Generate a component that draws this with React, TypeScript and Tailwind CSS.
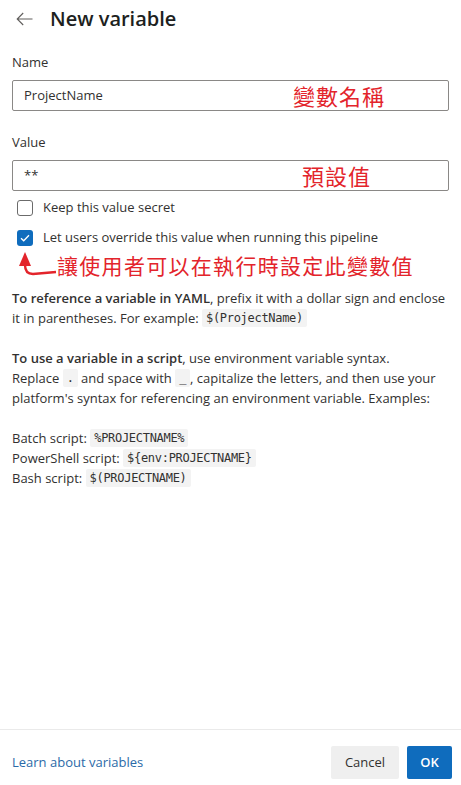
const body = { fontFamily: '"Open Sans", "Noto Sans", sans-serif' };
const cjk = { fontFamily: '"Noto Sans CJK TC", "Noto Sans CJK SC", sans-serif' };

function Code({ children }: { children: React.ReactNode }) {
  return (
    <code className="inline-block align-top mt-[1px] bg-[#f3f3f3] px-[4px] rounded-[2px] text-[12px] leading-[18px] text-[#323130] font-['DejaVu_Sans_Mono','Liberation_Mono',monospace] tracking-[-0.3px]">
      {children}
    </code>
  );
}

function Checkbox({ checked, label }: { checked?: boolean; label: string }) {
  return (
    <label className="flex items-center h-[16px] pl-[17px] gap-[10px] text-[13px] text-[#323130]">
      {checked ? (
        <span className="w-[16px] h-[16px] rounded-[3px] bg-[#0f6cbd] flex items-center justify-center">
          <svg width="10" height="8" viewBox="0 0 10 8" fill="none">
            <path d="M1 4.2 L3.7 6.8 L9 1.2" stroke="white" strokeWidth="1.3" />
          </svg>
        </span>
      ) : (
        <span className="w-[16px] h-[16px] rounded-[3px] border border-[#6b6b6b] bg-white" />
      )}
      <span>{label}</span>
    </label>
  );
}

function Field({ label, value, note, noteLeft }: { label: string; value: string; note: string; noteLeft: string }) {
  return (
    <div className="px-[12px]">
      <div className="text-[13px] text-[#323130] h-[20px] leading-[20px]">{label}</div>
      <div className="relative mt-[8px] h-[31px] border border-[#8a8886] rounded-[2px] flex items-center px-[11px] text-[13px] text-[#323130]">
        {value}
        <span
          className={`absolute ${noteLeft} top-[0px] text-[22px] leading-[29px] tracking-[1px] text-[#e3242b]`}
          style={cjk}
        >
          {note}
        </span>
      </div>
    </div>
  );
}

export default function App() {
  return (
    <div className="w-[461px] h-[785px] bg-white flex flex-col" style={body}>
      <div className="flex items-center h-[38px] pl-[16px] gap-[17px]">
        <svg width="17" height="14" viewBox="0 0 17 14" fill="none">
          <path d="M16.5 7 H1.2 M7.2 1 L1.2 7 L7.2 13" stroke="#605e5c" strokeWidth="1.1" />
        </svg>
        <h1 className="text-[20px] font-semibold text-[#201f1e]">New variable</h1>
      </div>

      <div className="flex-1 flex flex-col">
        <div className="mt-[14px]">
          <Field label="Name" value="ProjectName" note="變數名稱" noteLeft="left-[280px]" />
        </div>
        <div className="mt-[21px]">
          <Field label="Value" value="**" note="預設值" noteLeft="left-[289px]" />
        </div>

        <div className="mt-[9px] flex flex-col gap-[14px]">
          <Checkbox label="Keep this value secret" />
          <Checkbox checked label="Let users override this value when running this pipeline" />
        </div>

        <div className="flex items-center h-[28px] mt-[5px]">
          <svg width="42" height="28" viewBox="0 0 42 28" fill="none" className="ml-[15px]">
            <path d="M10 1 L4 15 L16 15 Z" fill="#e3242b" />
            <path d="M10 14 Q10 23 18 23 L41 21" stroke="#e3242b" strokeWidth="2.4" fill="none" />
          </svg>
          <span className="text-[21px] leading-[28px] tracking-[1.3px] text-[#e3242b]" style={cjk}>
            讓使用者可以在執行時設定此變數值
          </span>
        </div>

        <div className="px-[12px] mt-[9px] text-[13px] leading-[20px] text-[#323130]">
          <p>
            <b className="font-semibold">To reference a variable in YAML</b>, prefix it with a dollar sign and enclose it in
            parentheses. For example: <Code>$(ProjectName)</Code>
          </p>
          <p className="mt-[20px]">
            <b className="font-semibold">To use a variable in a script</b>, use environment variable syntax.
            <br />
            Replace <Code>.</Code> and space with <Code>_</Code>, capitalize the letters, and then use your platform's
            syntax for referencing an environment variable. Examples:
          </p>
          <p className="mt-[20px]">
            Batch script: <Code>%PROJECTNAME%</Code>
            <br />
            PowerShell script: <Code>{'${env:PROJECTNAME}'}</Code>
            <br />
            Bash script: <Code>$(PROJECTNAME)</Code>
          </p>
        </div>
      </div>

      <div className="border-t border-[#eaeaea] h-[56px] flex items-center justify-between pl-[12px] pr-[9px] pt-[10px]">
        <a className="text-[13px] text-[#2b6aa8]">Learn about variables</a>
        <div className="flex gap-[8px]">
          <button className="h-[33px] w-[68px] bg-[#efefef] rounded-[2px] text-[13px] text-[#323130]">Cancel</button>
          <button className="h-[33px] w-[45px] bg-[#0f6cbd] rounded-[2px] text-[13px] font-semibold text-white">OK</button>
        </div>
      </div>
    </div>
  );
}
